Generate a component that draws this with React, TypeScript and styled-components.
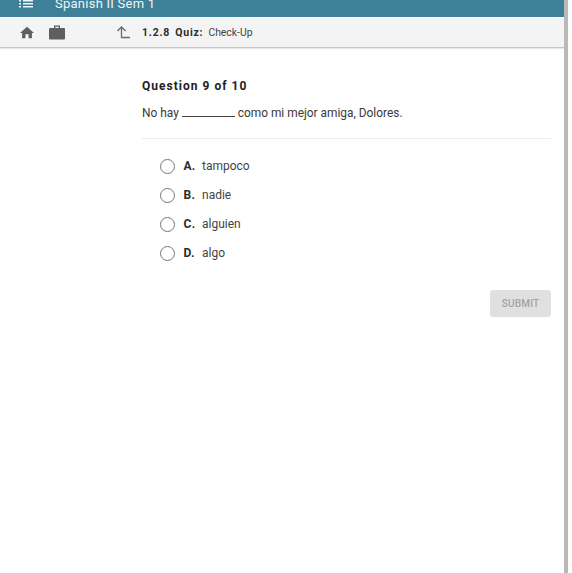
import React from "react";
import styled, { createGlobalStyle } from "styled-components";

const Global = createGlobalStyle`
  html, body { margin: 0; padding: 0; background: #fff; overflow: hidden; }
  body { font-family: Roboto, "Liberation Sans", sans-serif; color: #333; }
`;

const Window = styled.div`
  display: flex;
  width: 572px;
  height: 573px;
  overflow: hidden;
`;
const Page = styled.div`
  width: 564px;
  display: flex;
  flex-direction: column;
`;
const ScrollEdge = styled.div`
  width: 4px;
  background: #b9b9b9;
  flex: none;
`;
const TitleBar = styled.header`
  height: 17px;
  background: #3e8098;
  display: flex;
  align-items: flex-end;
  overflow: hidden;
  padding: 0 0 5px 19px;
  box-sizing: border-box;
  color: #eef5f7;
  flex: none;
`;
const MenuIcon = styled.svg`
  margin-bottom: 4px;
  flex: none;
`;
const Title = styled.span`
  font-size: 13px;
  line-height: 16px;
  margin-left: 22px;
  letter-spacing: 0.25px;
`;
const Toolbar = styled.nav`
  height: 31px;
  background: #f4f4f4;
  border-top: 1px solid #fafafa;
  border-bottom: 1px solid #c6c6c6;
  box-shadow: 0 1px 1px #e8e8e8;
  box-sizing: border-box;
  display: flex;
  align-items: center;
  padding-left: 20px;
  flex: none;
`;
const IconSlot = styled.span<{ $gap: number }>`
  display: flex;
  margin-right: ${(p) => p.$gap}px;
`;
const Crumb = styled.span`
  font-size: 10.5px;
  font-weight: 700;
  letter-spacing: 0.8px;
  color: #2c2c2c;
  margin-right: 5px;
`;
const CrumbText = styled.span`
  font-size: 10.4px;
  color: #444;
`;
const Main = styled.main`
  padding: 31px 13px 0 142px;
  display: flex;
  flex-direction: column;
`;
const Heading = styled.h1`
  margin: 0;
  font-size: 12px;
  line-height: 15px;
  font-weight: 700;
  letter-spacing: 1.02px;
  color: #222;
`;
const Prompt = styled.p`
  margin: 11px 0 0;
  font-size: 11.9px;
  line-height: 16px;
  color: #3a3a3a;
  padding-bottom: 17px;
  border-bottom: 1px solid #ececec;
`;
const Blank = styled.span`
  display: inline-block;
  width: 53px;
  border-bottom: 1px solid #444;
  margin: 0 3px;
`;
const Options = styled.div`
  display: flex;
  flex-direction: column;
  gap: 13px;
  padding: 19px 0 0 17.5px;
`;
const Option = styled.label`
  display: flex;
  align-items: center;
  height: 16px;
  font-size: 12px;
  color: #444;
`;
const Radio = styled.span`
  width: 15px;
  height: 15px;
  border: 1.8px solid #767676;
  border-radius: 50%;
  box-sizing: border-box;
  margin-right: 9px;
  flex: none;
`;
const Letter = styled.b`
  font-weight: 700;
  color: #2c2c2c;
  width: 18.5px;
  letter-spacing: 0.3px;
`;
const Actions = styled.div`
  display: flex;
  justify-content: flex-end;
  margin-top: 29px;
`;
const Submit = styled.button`
  width: 61px;
  height: 27px;
  background: #e0e0e0;
  border: none;
  border-radius: 3px;
  color: #a3a3a3;
  font: 500 10px Roboto, sans-serif;
  letter-spacing: 0.2px;
  padding: 0;
`;

const options = [
  ["A.", "tampoco"],
  ["B.", "nadie"],
  ["C.", "alguien"],
  ["D.", "algo"],
];

export default function App() {
  return (
    <Window>
      <Global />
      <Page>
        <TitleBar>
          <MenuIcon width="14" height="8" viewBox="0 0 14 8" fill="#eef5f7">
            <rect x="0" y="0" width="2" height="1.5" />
            <rect x="4" y="0" width="10" height="1.5" />
            <rect x="0" y="3" width="2" height="1.5" />
            <rect x="4" y="3" width="10" height="1.5" />
            <rect x="0" y="6" width="2" height="1.5" />
            <rect x="4" y="6" width="10" height="1.5" />
          </MenuIcon>
          <Title>Spanish II Sem 1</Title>
        </TitleBar>
        <Toolbar>
          <IconSlot $gap={15}>
            <svg width="14" height="13" viewBox="0 0 16 14" fill="#5f5f5f">
              <path d="M8 0.5 L16 7.5 H13.6 V13.5 H9.8 V9 H6.2 V13.5 H2.4 V7.5 H0 Z" />
            </svg>
          </IconSlot>
          <IconSlot $gap={52}>
            <svg width="16" height="15" viewBox="0 0 16 15" fill="#5f5f5f">
              <path d="M5 0.5 H11 V3 H15 A1 1 0 0 1 16 4 V13.5 A1 1 0 0 1 15 14.5 H1 A1 1 0 0 1 0 13.5 V4 A1 1 0 0 1 1 3 H5 Z M6.3 1.8 V3 H9.7 V1.8 Z" fillRule="evenodd" />
            </svg>
          </IconSlot>
          <IconSlot $gap={12}>
            <svg width="13" height="13" viewBox="0 0 13 13" fill="none" stroke="#6a6a6a" strokeWidth="1.3">
              <path d="M0.5 5 L4.5 1 L8.5 5 M4.5 1 V11.5 H13" />
            </svg>
          </IconSlot>
          <Crumb>1.2.8</Crumb>
          <Crumb>Quiz:</Crumb>
          <CrumbText>Check-Up</CrumbText>
        </Toolbar>
        <Main>
          <Heading>Question 9 of 10</Heading>
          <Prompt>
            No hay<Blank />como mi mejor amiga, Dolores.
          </Prompt>
          <Options>
            {options.map(([l, t]) => (
              <Option key={l}>
                <Radio />
                <Letter>{l}</Letter>
                {t}
              </Option>
            ))}
          </Options>
          <Actions>
            <Submit disabled>SUBMIT</Submit>
          </Actions>
        </Main>
      </Page>
      <ScrollEdge />
    </Window>
  );
}
